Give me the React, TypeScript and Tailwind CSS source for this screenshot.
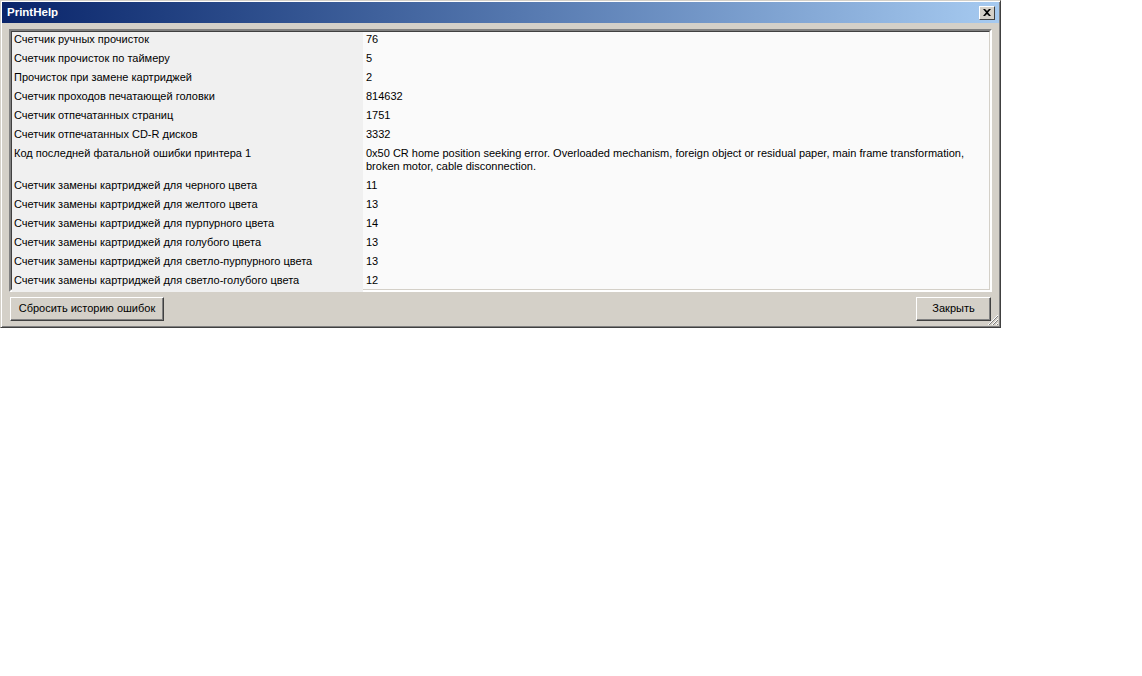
import React from "react";

type Row = { label: string; value: string[] };

const rows: Row[] = [
  { label: "Счетчик ручных прочисток", value: ["76"] },
  { label: "Счетчик прочисток по таймеру", value: ["5"] },
  { label: "Прочисток при замене картриджей", value: ["2"] },
  { label: "Счетчик проходов печатающей головки", value: ["814632"] },
  { label: "Счетчик отпечатанных страниц", value: ["1751"] },
  { label: "Счетчик отпечатанных CD-R дисков", value: ["3332"] },
  {
    label: "Код последней фатальной ошибки принтера 1",
    value: [
      "0x50 CR home position seeking error. Overloaded mechanism, foreign object or residual paper, main frame transformation,",
      "broken motor, cable disconnection.",
    ],
  },
  { label: "Счетчик замены картриджей для черного цвета", value: ["11"] },
  { label: "Счетчик замены картриджей для желтого цвета", value: ["13"] },
  { label: "Счетчик замены картриджей для пурпурного цвета", value: ["14"] },
  { label: "Счетчик замены картриджей для голубого цвета", value: ["13"] },
  { label: "Счетчик замены картриджей для светло-пурпурного цвета", value: ["13"] },
  { label: "Счетчик замены картриджей для светло-голубого цвета", value: ["12"] },
];

function Button({ children, className = "" }: { children: React.ReactNode; className?: string }) {
  return (
    <div
      className={
        "h-[24px] flex items-center justify-center bg-[#d4d0c8] border border-t-white border-l-white border-r-[#404040] border-b-[#404040] shadow-[inset_-1px_-1px_0_#808080] text-black " +
        className
      }
    >
      {children}
    </div>
  );
}

export default function App() {
  return (
    <div
      className="w-[1142px] h-[676px] bg-white text-[11px] text-black"
      style={{ fontFamily: '"Liberation Sans", Arial, sans-serif' }}
    >
      <div className="w-[1001px] h-[328px] bg-[#d4d0c8] border border-t-[#d4d0c8] border-l-[#d4d0c8] border-r-[#404040] border-b-[#404040] shadow-[inset_1px_1px_0_white,inset_-1px_-1px_0_#808080] flex flex-col">
        {/* caption */}
        <div className="h-[21px] mx-[1px] mt-[1px] flex items-center justify-between bg-gradient-to-r from-[#0a246a] to-[#a6caf0] pl-[5px] pr-[4px]">
          <span className="text-white font-bold text-[11.5px]">PrintHelp</span>
          <div className="w-[16px] h-[14px] bg-[#d4d0c8] border border-t-white border-l-white border-r-[#404040] border-b-[#404040] flex items-center justify-center">
            <svg width="8" height="7" viewBox="0 0 8 7">
              <path d="M0 0h2l2 2 2-2h2L5 3.5 8 7H6L4 5 2 7H0l3-3.5z" fill="black" />
            </svg>
          </div>
        </div>

        {/* list */}
        <div className="mx-[8px] mt-[6px] h-[263px] border-2 border-t-[#808080] border-l-[#808080] border-r-white border-b-white">
          <div className="h-full border border-t-[#404040] border-l-[#404040] border-r-[#d4d0c8] border-b-[#d4d0c8] bg-[#fafafa] flex flex-col">
            {rows.map((r, i) => (
              <div key={i} className="flex">
                <div className="w-[351px] bg-[#f0f0f0] pl-[2px] pt-[1px] pb-[5px]">
                  <div className="leading-[13px]">{r.label}</div>
                </div>
                <div className="flex-1 pl-[3px] pt-[1px] pb-[5px]">
                  {r.value.map((v, j) => (
                    <div key={j} className="leading-[13px]">
                      {v}
                    </div>
                  ))}
                </div>
              </div>
            ))}
            <div className="flex flex-1">
              <div className="w-[351px] bg-[#f0f0f0]" />
              <div className="flex-1" />
            </div>
          </div>
        </div>

        {/* buttons */}
        <div className="flex justify-between items-center px-[9px] mt-[4px] relative flex-1">
          <Button className="w-[154px] -mt-[6px]">Сбросить историю ошибок</Button>
          <Button className="w-[75px] -mt-[6px]">Закрыть</Button>
          <svg className="absolute right-[1px] bottom-[1px]" width="12" height="12" viewBox="0 0 12 12">
            <path d="M11 1L1 11M11 5L5 11M11 9L9 11" stroke="white" strokeWidth="1" />
            <path d="M11 2L2 11M11 6L6 11M11 10L10 11" stroke="#808080" strokeWidth="1" />
          </svg>
        </div>
      </div>
    </div>
  );
}
